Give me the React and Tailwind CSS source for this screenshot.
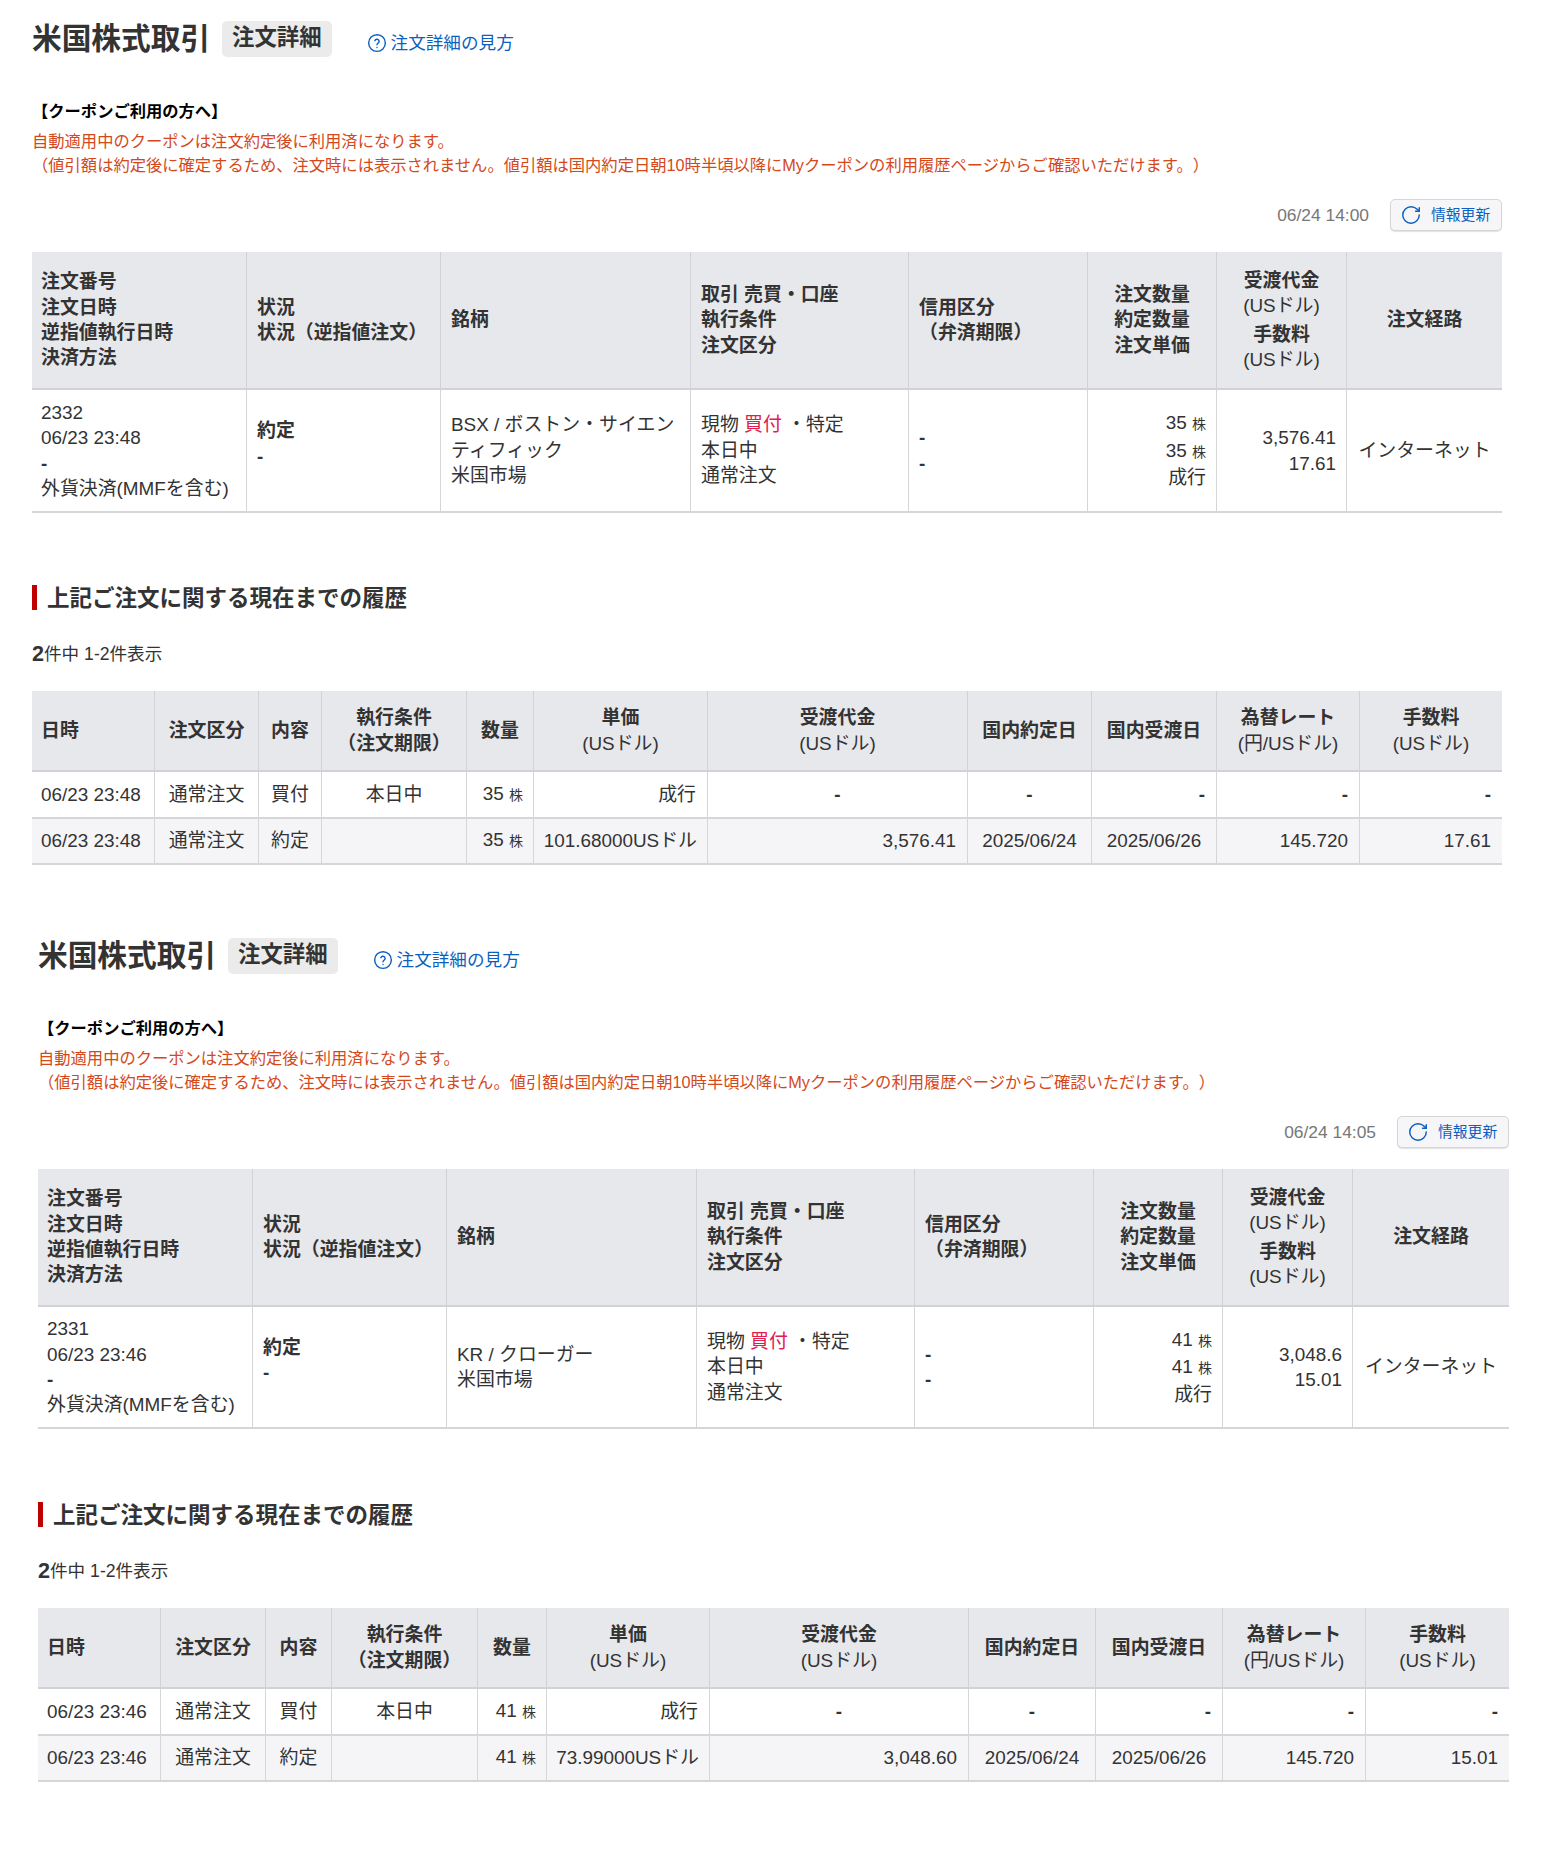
const orders = [
  {
    wrap: 'ml-[32px] w-[1470px] mb-[52px]',
    updated: '06/24 14:00',
    orderCols: ['w-[215px]', 'w-[194px]', 'w-[250px]', 'w-[218px]', 'w-[179px]', 'w-[129px]', 'w-[130px]', 'w-[155px]'],
    historyCols: ['w-[123px]', 'w-[104px]', 'w-[63px]', 'w-[145px]', 'w-[67px]', 'w-[174px]', 'w-[260px]', 'w-[124px]', 'w-[125px]', 'w-[143px]', 'w-[142px]'],
    orderRows: ['h-[138px]', 'h-[123px]'],
    historyGap: 'mt-[72px]',
    no: '2332',
    orderedAt: '06/23 23:48',
    name: 'BSX / ボストン・サイエンティフィック',
    qty: '35',
    amount: '3,576.41',
    fee: '17.61',
    price: '101.68000USドル',
    amountFull: '3,576.41',
  },
  {
    wrap: 'ml-[38px] w-[1471px]',
    updated: '06/24 14:05',
    orderCols: ['w-[215px]', 'w-[194px]', 'w-[250px]', 'w-[218px]', 'w-[179px]', 'w-[129px]', 'w-[130px]', 'w-[156px]'],
    historyCols: ['w-[123px]', 'w-[105px]', 'w-[66px]', 'w-[146px]', 'w-[69px]', 'w-[163px]', 'w-[259px]', 'w-[127px]', 'w-[127px]', 'w-[143px]', 'w-[143px]'],
    orderRows: ['h-[138px]', 'h-[122px]'],
    historyGap: 'mt-[73px]',
    no: '2331',
    orderedAt: '06/23 23:46',
    name: 'KR / クローガー',
    qty: '41',
    amount: '3,048.6',
    fee: '15.01',
    price: '73.99000USドル',
    amountFull: '3,048.60',
  },
];

const thBase = 'bg-[#e7e8ec] border-r border-b-2 border-r-[#d2d2d6] border-b-[#d2d2d6] last:border-r-0 px-[10px] align-middle font-bold';
const tdBase = 'border-r border-b-2 border-r-[#d6d6d8] border-b-[#d6d6d8] last:border-r-0 px-[11px] align-middle';

function Qty({ value }) {
  return (
    <>
      {value} <span className="text-[14px]">株</span>
    </>
  );
}

function Dash() {
  return <span className="font-bold">-</span>;
}

function Unit({ children = '(USドル)' }) {
  return <span className="font-normal">{children}</span>;
}

function HelpIcon() {
  return (
    <svg width="20" height="20" viewBox="0 0 24 24" fill="none" stroke="currentColor" strokeWidth="1.7" strokeLinecap="round" strokeLinejoin="round">
      <circle cx="12" cy="12" r="10" />
      <path d="M9.4 9.2a2.7 2.7 0 0 1 5.2.9c0 1.8-2.6 2.4-2.6 4" />
      <path d="M12 17.4h.01" />
    </svg>
  );
}

function RefreshIcon() {
  return (
    <svg width="22" height="22" viewBox="0 0 24 24" fill="none" stroke="currentColor" strokeWidth="1.6" strokeLinecap="round" strokeLinejoin="round">
      <path d="M21 12a9 9 0 1 1-9-9c2.52 0 4.93 1 6.74 2.74L21 8" />
      <path d="M21 4v4h-4" />
    </svg>
  );
}

function OrderTable({ order }) {
  return (
    <table className="w-full table-fixed border-separate border-spacing-0 leading-[25.4px]">
      <colgroup>
        {order.orderCols.map((c, i) => (
          <col key={i} className={c} />
        ))}
      </colgroup>
      <thead>
        <tr className={order.orderRows[0]}>
          <th className={`${thBase} !pl-[9px] text-left`}>
            注文番号<br />注文日時<br />逆指値執行日時<br />決済方法
          </th>
          <th className={`${thBase} text-left`}>
            状況<br />状況（逆指値注文）
          </th>
          <th className={`${thBase} text-left`}>銘柄</th>
          <th className={`${thBase} text-left`}>
            取引 売買・口座<br />執行条件<br />注文区分
          </th>
          <th className={`${thBase} text-left`}>
            信用区分<br />（弁済期限）
          </th>
          <th className={`${thBase} text-center`}>
            注文数量<br />約定数量<br />注文単価
          </th>
          <th className={`${thBase} text-center`}>
            <div>受渡代金</div>
            <Unit />
            <div className="mt-[3px]">手数料</div>
            <Unit />
          </th>
          <th className={`${thBase} text-center`}>注文経路</th>
        </tr>
      </thead>
      <tbody>
        <tr className={order.orderRows[1]}>
          <td className={`${tdBase} !pl-[9px] !pr-0`}>
            {order.no}<br />{order.orderedAt}<br /><Dash /><br />外貨決済(MMFを含む)
          </td>
          <td className={`${tdBase} !px-[10px] pb-[14px] font-bold`}>
            約定<br />-
          </td>
          <td className={`${tdBase} !px-[10px]`}>
            {order.name}<br />米国市場
          </td>
          <td className={`${tdBase} !px-[10px]`}>
            現物 <span className="text-[#e0204c]">買付</span> ・特定<br />本日中<br />通常注文
          </td>
          <td className={`${tdBase} !px-[10px]`}>
            <Dash /><br /><Dash />
          </td>
          <td className={`${tdBase} !px-[10px] text-right`}>
            <Qty value={order.qty} /><br /><Qty value={order.qty} /><br />成行
          </td>
          <td className={`${tdBase} !pr-[10px] text-right`}>
            {order.amount}<br />{order.fee}
          </td>
          <td className={`${tdBase} text-center !px-0`}>インターネット</td>
        </tr>
      </tbody>
    </table>
  );
}

function HistoryTable({ order }) {
  return (
    <table className="w-full table-fixed border-separate border-spacing-0 leading-[25.4px]">
      <colgroup>
        {order.historyCols.map((c, i) => (
          <col key={i} className={c} />
        ))}
      </colgroup>
      <thead>
        <tr className="h-[81px]">
          <th className={`${thBase} !pl-[9px] text-left`}>日時</th>
          <th className={`${thBase} !px-0 text-center`}>注文区分</th>
          <th className={`${thBase} !px-0 text-center`}>内容</th>
          <th className={`${thBase} !px-0 text-center`}>執行条件<br />（注文期限）</th>
          <th className={`${thBase} !px-0 text-center`}>数量</th>
          <th className={`${thBase} !px-0 text-center`}>単価<br /><Unit /></th>
          <th className={`${thBase} !px-0 text-center`}>受渡代金<br /><Unit /></th>
          <th className={`${thBase} !px-0 text-center`}>国内約定日</th>
          <th className={`${thBase} !px-0 text-center`}>国内受渡日</th>
          <th className={`${thBase} !px-0 text-center`}>為替レート<br /><Unit>(円/USドル)</Unit></th>
          <th className={`${thBase} !px-0 text-center`}>手数料<br /><Unit /></th>
        </tr>
      </thead>
      <tbody>
        <tr className="h-[47px]">
          <td className={`${tdBase} !pl-[9px] !pr-0`}>{order.orderedAt}</td>
          <td className={`${tdBase} !px-0 text-center`}>通常注文</td>
          <td className={`${tdBase} !px-0 text-center`}>買付</td>
          <td className={`${tdBase} !px-0 text-center`}>本日中</td>
          <td className={`${tdBase} !px-[10px] text-right`}><Qty value={order.qty} /></td>
          <td className={`${tdBase} text-right`}>成行</td>
          <td className={`${tdBase} text-center`}><Dash /></td>
          <td className={`${tdBase} text-center`}><Dash /></td>
          <td className={`${tdBase} text-right`}><Dash /></td>
          <td className={`${tdBase} text-right`}><Dash /></td>
          <td className={`${tdBase} text-right`}><Dash /></td>
        </tr>
        <tr className="h-[46px] bg-[#f5f5f8]">
          <td className={`${tdBase} !pl-[9px] !pr-0`}>{order.orderedAt}</td>
          <td className={`${tdBase} !px-0 text-center`}>通常注文</td>
          <td className={`${tdBase} !px-0 text-center`}>約定</td>
          <td className={`${tdBase} !px-0 text-center`}></td>
          <td className={`${tdBase} !px-[10px] text-right`}><Qty value={order.qty} /></td>
          <td className={`${tdBase} !pl-0 !pr-[10px] text-right`}>{order.price}</td>
          <td className={`${tdBase} text-right`}>{order.amountFull}</td>
          <td className={`${tdBase} !px-0 text-center`}>2025/06/24</td>
          <td className={`${tdBase} !px-0 text-center`}>2025/06/26</td>
          <td className={`${tdBase} text-right`}>145.720</td>
          <td className={`${tdBase} text-right`}>{order.fee}</td>
        </tr>
      </tbody>
    </table>
  );
}

function OrderSection({ order }) {
  return (
    <section className={order.wrap}>
      {/* Title row */}
      <div className="flex items-start pt-[21px]">
        <h1 className="w-[180px] text-[29.7px] leading-[36px] font-bold whitespace-nowrap">米国株式取引</h1>
        <span className="ml-[10px] h-[36px] rounded-[5px] bg-[#ebebeb] px-[10px] text-[22.4px] leading-[33px] font-bold">
          注文詳細
        </span>
        <a className="ml-[35px] mt-[9px] flex h-[26px] items-center gap-[4px] text-[17.6px] text-[#0c5fc0]">
          <HelpIcon />
          注文詳細の見方
        </a>
      </div>

      {/* Coupon notice */}
      <p className="mt-[42px] text-[16.3px] leading-[24px] font-bold text-black">【クーポンご利用の方へ】</p>
      <p className="mt-[6px] text-[16.3px] leading-[24px] text-[#d4481a]">
        自動適用中のクーポンは注文約定後に利用済になります。<br />
        （値引額は約定後に確定するため、注文時には表示されません。値引額は国内約定日朝10時半頃以降にMyクーポンの利用履歴ページからご確認いただけます。）
      </p>

      {/* Updated at + refresh */}
      <div className="mt-[22px] flex items-center justify-end gap-[21px]">
        <span className="text-[17.4px] text-[#777]">{order.updated}</span>
        <button className="flex h-[32px] w-[112px] items-center gap-[9px] rounded-[5px] border border-[#d6d6d6] bg-[#f6f6f8] pl-[9px] text-[14.8px] text-[#0c5fc0] shadow-[0_1px_1px_rgba(0,0,0,0.12)]">
          <RefreshIcon />
          情報更新
        </button>
      </div>

      <div className="mt-[21px]">
        <OrderTable order={order} />
      </div>

      <h2 className={`${order.historyGap} h-[25px] border-l-[5px] border-[#c00000] pl-[10px] text-[22.5px] leading-[28px] font-bold`}>
        上記ご注文に関する現在までの履歴
      </h2>

      <p className="mt-[29px] flex h-[30px] items-center text-[17.6px]">
        <span className="text-[21.6px] font-bold">2</span>件中 1-2件表示
      </p>

      <div className="mt-[22px]">
        <HistoryTable order={order} />
      </div>
    </section>
  );
}

export default function App() {
  return (
    <div className="min-h-[1864px] bg-white text-[18.9px] text-[#333] [text-spacing-trim:space-all] font-['Liberation_Sans','Noto_Sans_CJK_JP',sans-serif]">
      {orders.map((o) => (
        <OrderSection key={o.no} order={o} />
      ))}
    </div>
  );
}
